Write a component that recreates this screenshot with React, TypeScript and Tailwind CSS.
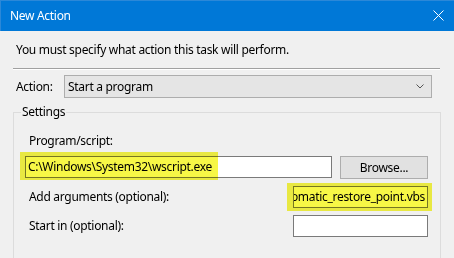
import React from "react";

export default function App() {
  return (
    <div className="relative flex h-[258px] w-[454px] flex-col overflow-hidden bg-[#f0f0f0] font-['Noto_Sans',sans-serif] text-[12px] leading-[16px] tracking-[-0.3px] text-black">
      {/* Title bar */}
      <div className="flex h-[31px] shrink-0 items-center justify-between border-l border-t border-[#2b88d8] bg-[#0078d7] pl-[9px] pr-[10px] text-white">
        <span>New Action</span>
        <svg width="11" height="11" viewBox="0 0 11 11" className="mt-[-1px]">
          <path d="M0.5 0.5 L10.5 10.5 M10.5 0.5 L0.5 10.5" stroke="white" strokeWidth="1" fill="none" />
        </svg>
      </div>

      {/* Body */}
      <div className="flex flex-col px-[13px]">
        <div className="mt-[11px] pl-[3px]">You must specify what action this task will perform.</div>
        <div className="mt-[10px] mr-[1px] h-[1px] bg-[#a0a0a0]" />
        <div className="mr-[1px] h-[1px] bg-white" />

        <div className="mt-[5px] flex items-center">
          <div className="w-[51px] pl-[3px]">Action:</div>
          <div className="flex h-[23px] w-[368px] items-center justify-between border border-[#adadad] bg-[#e5e5e5] pl-[3px] pr-[7px]">
            <span>Start a program</span>
            <svg width="8" height="5" viewBox="0 0 8 5">
              <path d="M0.5 0.5 L4 4 L7.5 0.5" stroke="#555" strokeWidth="1" fill="none" />
            </svg>
          </div>
        </div>

        <fieldset className="mt-[6px] h-[200px] w-[428px] border border-[#dcdcdc] pl-[11px] pr-[12px]">
          <legend className="ml-[-4px] px-[1px] leading-[16px]">Settings</legend>
          <div className="mt-[13px] pl-[4px]">Program/script:</div>
          <div className="mt-[7px] flex items-start justify-between">
            <div className="flex h-[22px] w-[307px] items-center border border-[#7a7a7a] bg-white pl-[2px]">
              C:\Windows\System32\wscript.exe
            </div>
            <div className="flex h-[23px] w-[88px] items-center justify-center border border-[#adadad] bg-[#e1e1e1]">
              Browse...
            </div>
          </div>
          <div className="mt-[7px] flex items-center justify-between">
            <div className="pl-[4px]">Add arguments (optional):</div>
            <div className="flex h-[22px] w-[135px] items-center justify-end overflow-hidden whitespace-nowrap border border-[#7a7a7a] bg-white pr-[2px]">
              <span className="shrink-0">automatic_restore_point.vbs</span>
            </div>
          </div>
          <div className="mt-[7px] flex items-center justify-between">
            <div className="pl-[4px]">Start in (optional):</div>
            <div className="h-[22px] w-[135px] border border-[#7a7a7a] bg-white" />
          </div>
        </fieldset>
      </div>

      {/* Highlighter marks */}
      <div className="pointer-events-none absolute left-[20px] top-[152px] h-[28px] w-[198px] bg-[#f7f746] mix-blend-multiply" />
      <div className="pointer-events-none absolute left-[287px] top-[183px] h-[28px] w-[145px] bg-[#f7f746] mix-blend-multiply" />
    </div>
  );
}
